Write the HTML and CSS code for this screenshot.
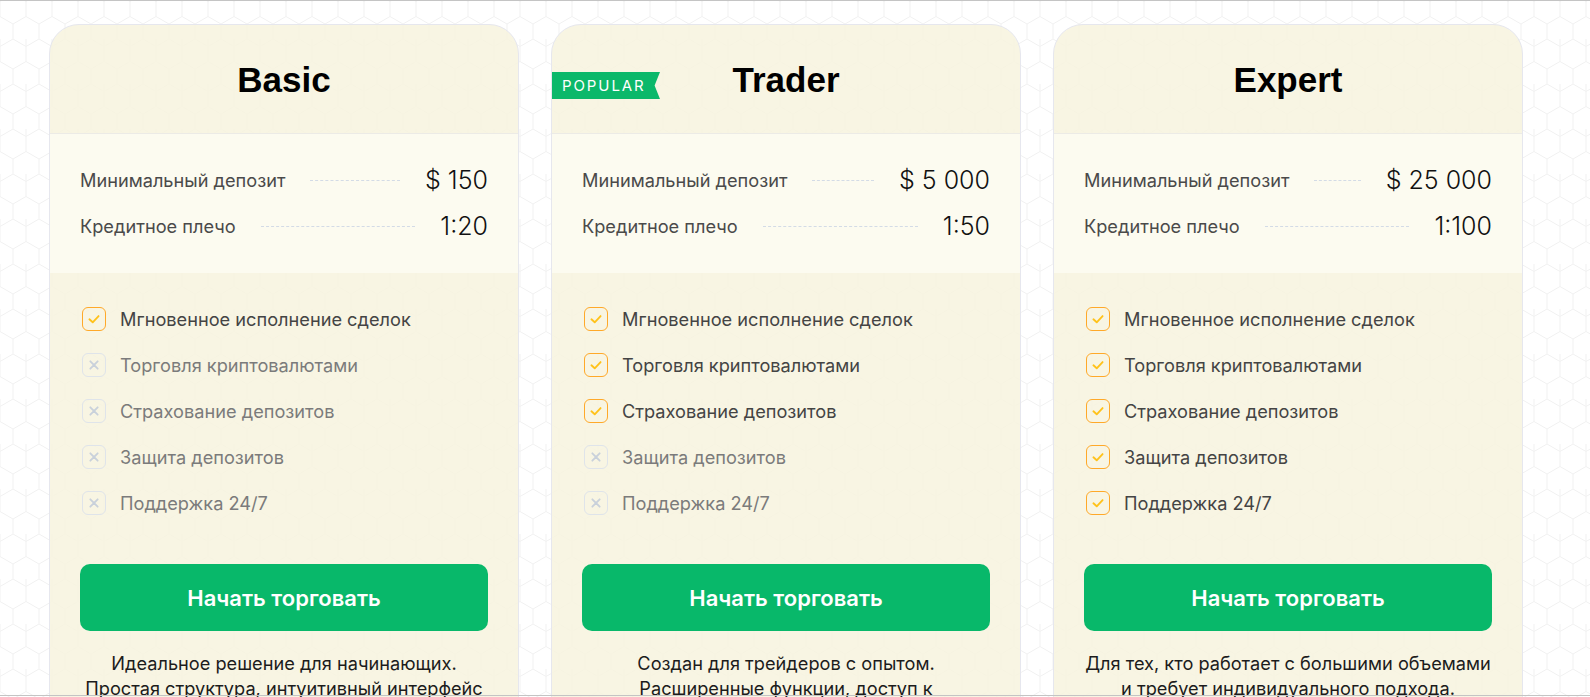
FILE: index.html
```html
<!DOCTYPE html>
<html lang="ru">
<head>
<meta charset="utf-8">
<title>Тарифы</title>
<link rel="stylesheet" href="styles.css">
</head>
<body>
<svg class="hex-bg" aria-hidden="true">
  <defs>
    <pattern id="hex" width="26" height="45" patternUnits="userSpaceOnUse" x="0" y="-6">
      <path d="M13 0 L26 7.5 L26 22.5 L13 30 L0 22.5 L0 7.5 Z M13 30 L13 45 M0 7.5 L0 -7.5 M26 7.5 L26 -7.5" fill="none" stroke="#f1f1f1" stroke-width="1"/>
    </pattern>
  </defs>
  <rect width="100%" height="100%" fill="url(#hex)"/>
</svg>

<main class="plans">
  <article class="plan">
    <header class="plan-head"><h2>Basic</h2></header>
    <div class="plan-stats">
      <div class="stat"><span class="stat-label">Минимальный депозит</span><span class="stat-line"></span><span class="stat-value">$ 150</span></div>
      <div class="stat"><span class="stat-label">Кредитное плечо</span><span class="stat-line"></span><span class="stat-value">1:20</span></div>
    </div>
    <div class="plan-body">
      <ul class="features">
        <li class="on"><span class="box"><svg viewBox="0 0 24 24"><path d="M7 12.3 L10.6 15.6 L17 8.8"/></svg></span>Мгновенное исполнение сделок</li>
        <li class="off"><span class="box"><svg viewBox="0 0 24 24"><path d="M8 8 L16 16 M16 8 L8 16"/></svg></span>Торговля криптовалютами</li>
        <li class="off"><span class="box"><svg viewBox="0 0 24 24"><path d="M8 8 L16 16 M16 8 L8 16"/></svg></span>Страхование депозитов</li>
        <li class="off"><span class="box"><svg viewBox="0 0 24 24"><path d="M8 8 L16 16 M16 8 L8 16"/></svg></span>Защита депозитов</li>
        <li class="off"><span class="box"><svg viewBox="0 0 24 24"><path d="M8 8 L16 16 M16 8 L8 16"/></svg></span>Поддержка 24/7</li>
      </ul>
      <a class="btn" href="#">Начать торговать</a>
      <p class="desc">Идеальное решение для начинающих.<br>Простая структура, интуитивный интерфейс и минимальный порог входа.</p>
    </div>
  </article>

  <article class="plan">
    <span class="badge">POPULAR</span>
    <header class="plan-head"><h2>Trader</h2></header>
    <div class="plan-stats">
      <div class="stat"><span class="stat-label">Минимальный депозит</span><span class="stat-line"></span><span class="stat-value">$ 5 000</span></div>
      <div class="stat"><span class="stat-label">Кредитное плечо</span><span class="stat-line"></span><span class="stat-value">1:50</span></div>
    </div>
    <div class="plan-body">
      <ul class="features">
        <li class="on"><span class="box"><svg viewBox="0 0 24 24"><path d="M7 12.3 L10.6 15.6 L17 8.8"/></svg></span>Мгновенное исполнение сделок</li>
        <li class="on"><span class="box"><svg viewBox="0 0 24 24"><path d="M7 12.3 L10.6 15.6 L17 8.8"/></svg></span>Торговля криптовалютами</li>
        <li class="on"><span class="box"><svg viewBox="0 0 24 24"><path d="M7 12.3 L10.6 15.6 L17 8.8"/></svg></span>Страхование депозитов</li>
        <li class="off"><span class="box"><svg viewBox="0 0 24 24"><path d="M8 8 L16 16 M16 8 L8 16"/></svg></span>Защита депозитов</li>
        <li class="off"><span class="box"><svg viewBox="0 0 24 24"><path d="M8 8 L16 16 M16 8 L8 16"/></svg></span>Поддержка 24/7</li>
      </ul>
      <a class="btn" href="#">Начать торговать</a>
      <p class="desc">Создан для трейдеров с опытом.<br>Расширенные функции, доступ к криптовалютам и страхование депозитов.</p>
    </div>
  </article>

  <article class="plan">
    <header class="plan-head"><h2>Expert</h2></header>
    <div class="plan-stats">
      <div class="stat"><span class="stat-label">Минимальный депозит</span><span class="stat-line"></span><span class="stat-value">$ 25 000</span></div>
      <div class="stat"><span class="stat-label">Кредитное плечо</span><span class="stat-line"></span><span class="stat-value">1:100</span></div>
    </div>
    <div class="plan-body">
      <ul class="features">
        <li class="on"><span class="box"><svg viewBox="0 0 24 24"><path d="M7 12.3 L10.6 15.6 L17 8.8"/></svg></span>Мгновенное исполнение сделок</li>
        <li class="on"><span class="box"><svg viewBox="0 0 24 24"><path d="M7 12.3 L10.6 15.6 L17 8.8"/></svg></span>Торговля криптовалютами</li>
        <li class="on"><span class="box"><svg viewBox="0 0 24 24"><path d="M7 12.3 L10.6 15.6 L17 8.8"/></svg></span>Страхование депозитов</li>
        <li class="on"><span class="box"><svg viewBox="0 0 24 24"><path d="M7 12.3 L10.6 15.6 L17 8.8"/></svg></span>Защита депозитов</li>
        <li class="on"><span class="box"><svg viewBox="0 0 24 24"><path d="M7 12.3 L10.6 15.6 L17 8.8"/></svg></span>Поддержка 24/7</li>
      </ul>
      <a class="btn" href="#">Начать торговать</a>
      <p class="desc">Для тех, кто работает с большими объемами<br>и требует индивидуального подхода.</p>
    </div>
  </article>
</main>

<div class="frame frame-top"></div>
<div class="frame frame-bottom"></div>
</body>
</html>
```

FILE: styles.css
```css
* { box-sizing: border-box; }

html, body {
  margin: 0;
  padding: 0;
  background: #ffffff;
  height: 100%;
  overflow: hidden;
}

body {
  font-family: "Inter", "Noto Sans", sans-serif;
  color: #1a1a1a;
  position: relative;
}

.hex-bg {
  position: absolute;
  inset: 0;
  width: 100%;
  height: 100%;
  z-index: 0;
}

.frame {
  position: fixed;
  left: 0;
  right: 0;
  height: 1px;
  background: #c4c4c4;
  z-index: 10;
}
.frame-top { top: 0; }
.frame-bottom { bottom: 1px; }

.plans {
  position: relative;
  z-index: 1;
  display: grid;
  grid-template-columns: repeat(3, 470px);
  gap: 32px;
  padding: 24px 0 0 49px;
}

.plan {
  position: relative;
  border: 1px solid #e6e7ee;
  border-radius: 30px;
  overflow: hidden;
  background: rgba(247, 243, 222, 0.85);
  display: flex;
  flex-direction: column;
}

.plan-head {
  height: 109px;
  display: flex;
  align-items: center;
  justify-content: center;
  border-bottom: 1px solid #ecebe6;
}

.plan-head h2 {
  margin: 0;
  padding-top: 1px;
  font-family: "Liberation Sans", Arial, sans-serif;
  font-weight: 700;
  font-size: 35px;
  color: #000;
}

.badge {
  position: absolute;
  top: 47px;
  left: 0;
  width: 108px;
  height: 27px;
  background: #0bb86a;
  color: #fff;
  font-size: 15px;
  letter-spacing: 1.9px;
  line-height: 27px;
  padding-left: 10px;
  clip-path: polygon(0 0, 100% 0, 95% 50%, 100% 100%, 0 100%);
}

.plan-stats {
  background: rgba(253, 251, 242, 0.85);
  padding: 31px 30px 32px;
  display: flex;
  flex-direction: column;
  gap: 16px;
}

.stat {
  display: flex;
  align-items: center;
  height: 30px;
}

.stat-label {
  font-size: 18.2px;
  color: #4a4a4a;
}

.stat-line {
  flex: 1;
  margin: 0 25px;
  border-top: 1px dashed #d3dbe6;
}

.stat-value {
  font-size: 25px;
  font-weight: 300;
  color: #111;
}

.plan-body {
  padding: 34px 30px 0;
  display: flex;
  flex-direction: column;
}

.features {
  list-style: none;
  margin: 0;
  padding: 0 0 0 2px;
  display: flex;
  flex-direction: column;
  gap: 22px;
}

.features li {
  display: flex;
  align-items: center;
  gap: 14px;
  height: 24px;
  font-size: 18.2px;
}

.box {
  width: 24px;
  height: 24px;
  border-radius: 6px;
  display: flex;
  align-items: center;
  justify-content: center;
  flex: none;
}
.box svg { width: 22px; height: 22px; fill: none; stroke-width: 2; stroke-linecap: round; stroke-linejoin: round; }

.on { color: #444444; }
.on .box { border: 1.6px solid #ffa929; }
.on .box svg { stroke: #ffc21a; }

.off { color: #7b7b7b; }
.off .box { border: 1.6px solid #dfe4ea; }
.off .box svg { stroke: #c9d1db; }

.btn {
  margin-top: 49px;
  height: 67px;
  border-radius: 10px;
  background: #08b86a;
  color: #fff;
  text-decoration: none;
  font-size: 22px;
  font-weight: 600;
  display: flex;
  align-items: center;
  justify-content: center;
}

.desc {
  margin: 20px 0 0;
  text-align: center;
  font-size: 18.2px;
  line-height: 25px;
  color: #1c1c1c;
}
```
